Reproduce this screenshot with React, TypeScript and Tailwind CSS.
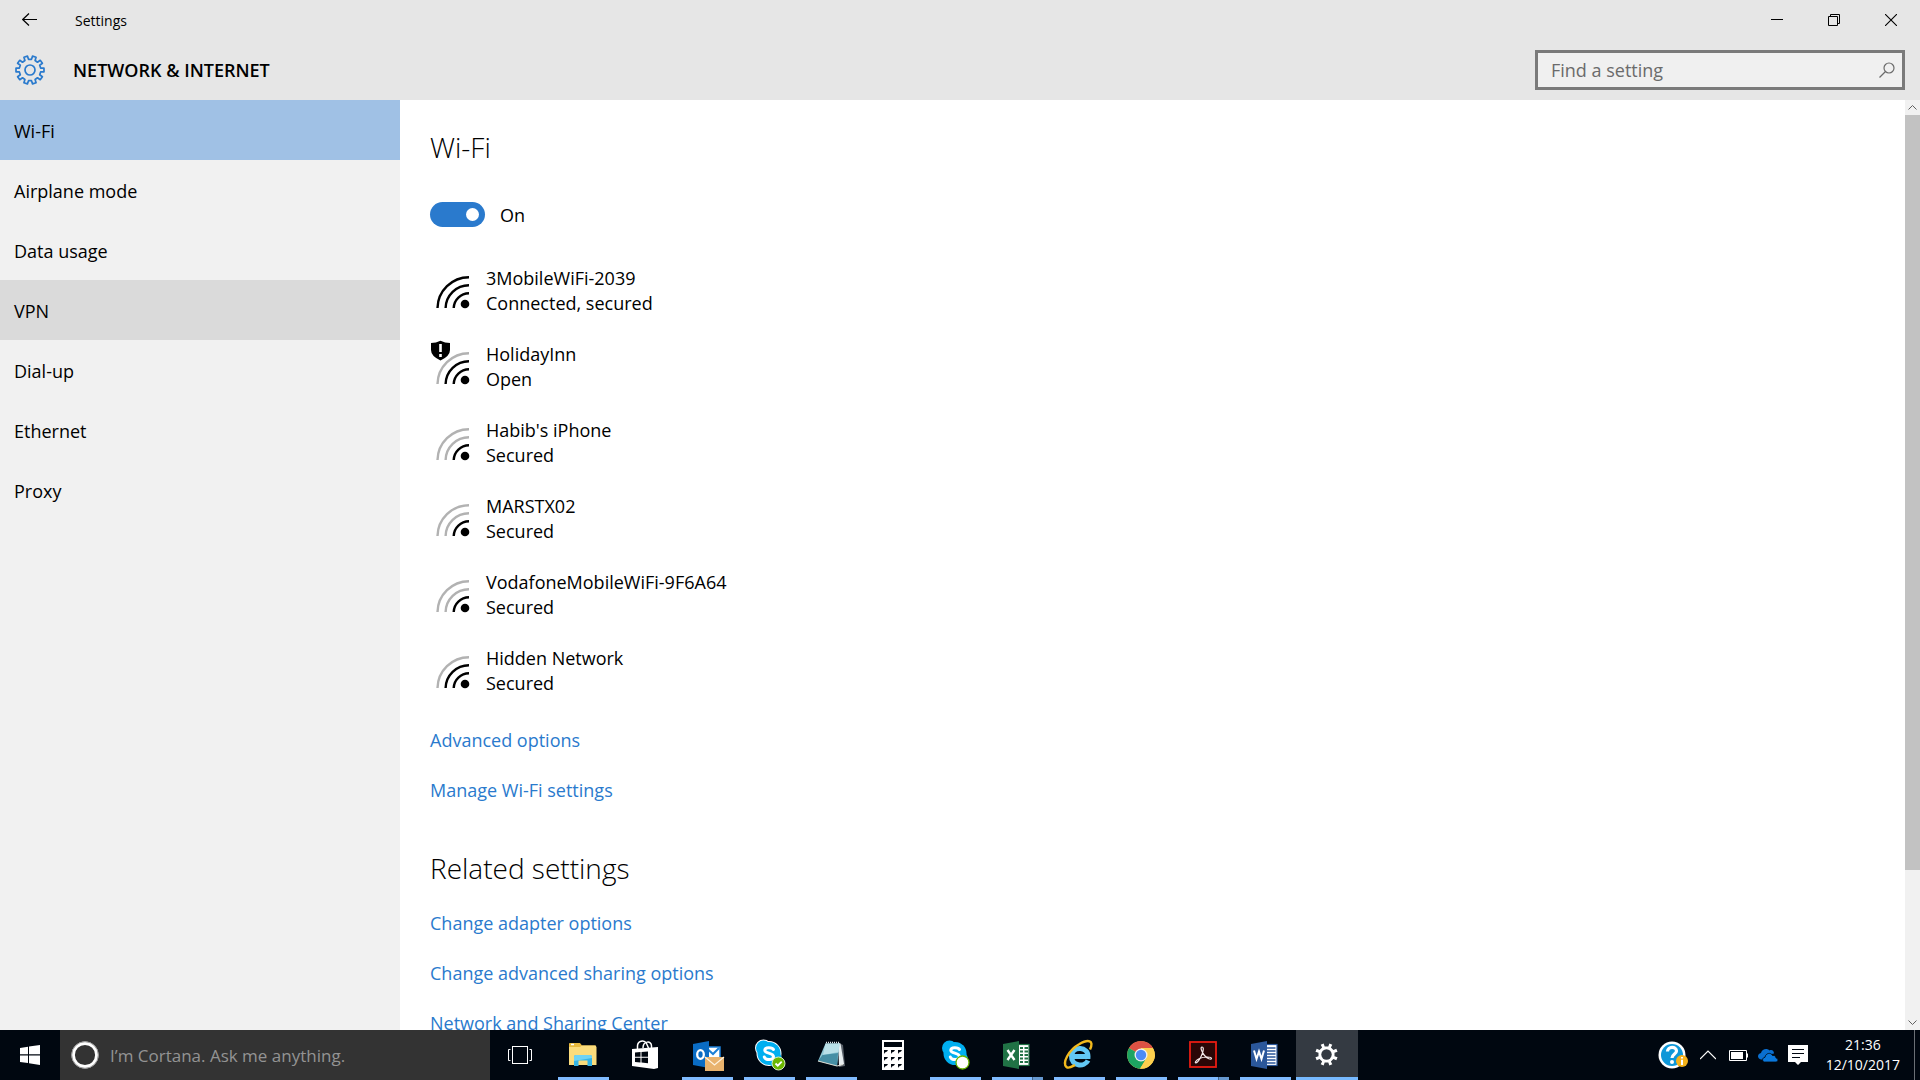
import React from "react";

type Level = 1 | 2 | 3;

const networks: { name: string; status: string; level: Level; shield?: boolean }[] = [
  { name: "3MobileWiFi-2039", status: "Connected, secured", level: 3 },
  { name: "HolidayInn", status: "Open", level: 2, shield: true },
  { name: "Habib's iPhone", status: "Secured", level: 1 },
  { name: "MARSTX02", status: "Secured", level: 1 },
  { name: "VodafoneMobileWiFi-9F6A64", status: "Secured", level: 1 },
  { name: "Hidden Network", status: "Secured", level: 2 },
];

const sections = ["Wi-Fi", "Airplane mode", "Data usage", "VPN", "Dial-up", "Ethernet", "Proxy"];

function gearPath(cx: number, cy: number, teeth: number, outer: number, inner: number, top: number, base: number) {
  const pt = (r: number, a: number) => `${(cx + r * Math.sin(a)).toFixed(2)} ${(cy - r * Math.cos(a)).toFixed(2)}`;
  const step = (2 * Math.PI) / teeth;
  const points: string[] = [];
  for (let i = 0; i < teeth; i++) {
    const a = (i + 0.5) * step;
    points.push(pt(inner, a - base * step), pt(outer, a - top * step), pt(outer, a + top * step), pt(inner, a + base * step));
  }
  return `M${points.join("L")}Z`;
}

function SignalIcon({ level, shield }: { level: Level; shield?: boolean }) {
  const tone = (n: number) => (level >= n ? "#000" : "#b2b2b2");
  return (
    <svg viewBox="0 0 40 54" className="h-[54px] w-10 shrink-0" fill="none" strokeWidth="2.4" aria-hidden="true">
      <path d="M7.5 44A31.5 31.5 0 0 1 39 13.2" stroke={tone(3)} />
      <path d="M15.6 44A23.4 23.4 0 0 1 39 21.2" stroke={tone(2)} />
      <path d="M23.7 44A15.4 15.4 0 0 1 39 29.2" stroke={tone(1)} />
      <circle cx="35" cy="40" r="4.3" fill="#000" />
      {shield && (
        <>
          <path d="M1 3Q6 3 10.500 .8Q15 3 20 3V10Q20 16 10.500 20.500Q1 16 1 10Z" fill="#000" />
          <path d="M10.500 4V12M10.500 14V17" stroke="#fff" strokeWidth="2.600" />
        </>
      )}
    </svg>
  );
}

function TextLink({ children }: { children: React.ReactNode }) {
  return (
    <div className="flex h-[50px] items-center">
      <a href="#" className="text-[#2a7acd]">
        {children}
      </a>
    </div>
  );
}

function SkypeCloud() {
  return (
    <>
      <circle cx="8.500" cy="8" r="7.500" fill="#00aff0" />
      <circle cx="19.500" cy="19" r="7.500" fill="#00aff0" />
      <circle cx="14" cy="13.500" r="11.500" fill="#00aff0" />
      <path d="M18.500 9.500C17.500 7.500 10 6.500 9.800 10.200C9.700 13.800 18.500 12.500 18.500 16.700C18.500 20.500 10.500 20.500 9.300 17" fill="none" stroke="#fff" strokeWidth="3" strokeLinecap="round" />
    </>
  );
}

const icons: Record<string, React.ReactNode> = {
  "Task View": (
    <g fill="none" stroke="#fff">
      <rect x="5.500" y="6.500" width="15" height="17" />
      <path d="M3.500 9.500H1.500V20.500H3.500M22.500 9.500H24.500V20.500H22.500" />
    </g>
  ),
  "File Explorer": (
    <>
      <path d="M0 3.500Q0 3 1 3H11L13 5.500H26Q27 5.500 27 6.500V23H0Z" fill="#e8b93e" />
      <path d="M0 7H11L13 5.500H26.500L27.500 7V25H0Z" fill="#fbdc7c" />
      <path d="M2 4.500H5" stroke="#fff" strokeWidth="1.500" />
      <path d="M5 26V17Q5 15 7 15H21Q23 15 23 17V26H18.500V20.500H9.500V26Z" fill="#36b5e6" />
      <path d="M5 21V17Q5 15 7 15H21Q23 15 23 17V18Z" fill="#6fd3f5" />
    </>
  ),
  Store: (
    <>
      <path d="M1 9L27 7V28L23 29L1 26Z" fill="#fff" />
      <path d="M6.500 9V6C6.500 1 13 -1 15.500 3.500L17.500 8M12 8C12 1 20.500 0 20.500 6V8" fill="none" stroke="#fff" strokeWidth="1.500" />
      <path d="M4 12.500L9.500 12V16.800H4ZM10.500 12L17 11.500V16.800H10.500ZM4 17.800H9.500V22.500L4 22ZM10.500 17.800H17V23.300L10.500 22.600Z" fill="#000710" />
    </>
  ),
  Outlook: (
    <>
      <rect x="14" y="7" width="13" height="12" fill="#fff" stroke="#1b7fd6" strokeWidth="1.500" />
      <path d="M15 9.500L20 14L26 8" fill="none" stroke="#1b7fd6" strokeWidth="2" />
      <path d="M0 4L16 1V28L0 25Z" fill="#0a6cc4" />
      <ellipse cx="7.500" cy="14.500" rx="3.300" ry="4.300" fill="none" stroke="#fff" strokeWidth="2.300" />
      <path d="M12 17H31V31H12Z" fill="#e9b36e" />
      <path d="M12 17L21.500 25L31 17" fill="none" stroke="#fff3df" strokeWidth="1.200" />
    </>
  ),
  Skype: (
    <>
      <g fill="#fff" stroke="#fff" strokeWidth="2">
        <circle cx="8.500" cy="8" r="7.500" />
        <circle cx="14" cy="13.500" r="11.500" />
      </g>
      <SkypeCloud />
      <circle cx="23.500" cy="23.500" r="6.500" fill="#6bb700" stroke="#d9efbd" strokeWidth="1" />
      <path d="M20.500 23.500L22.800 25.700L26.700 21.700" fill="none" stroke="#fff" strokeWidth="1.800" />
    </>
  ),
  Notepad: (
    <>
      <path d="M22 3L26 5L28 26L22 27Z" fill="#59616a" />
      <path d="M21 3L23.500 3.500L27 24L22 26Z" fill="#e7eef0" />
      <path d="M8.500 3.500H22.500L20 26L1 21Z" fill="#8fc8d6" />
      <path d="M8.500 3.500H22.500L21.500 12L6 15Z" fill="#b9e0e8" />
      <path d="M5.500 15L21 13L20 26L1 21Z" fill="#468fa5" />
      <path d="M1 21L20 26L26 24.500" fill="none" stroke="#d8d8d0" strokeWidth="1.200" />
      <path d="M9 2.500H23" stroke="#dce3e6" strokeWidth="1.500" strokeDasharray="1 1" />
    </>
  ),
  Calculator: (
    <>
      <rect x="3" y="0" width="22" height="30" fill="#fff" />
      <rect x="5" y="2" width="18" height="5" fill="#000710" />
      {[10, 17, 24].map((y) => [5, 12, 19].map((x) => <path key={`${x}-${y}`} d={`M${x} ${y}h4l-1 1.500l-2 1l-1 1.500z`} fill="#000710" />))}
    </>
  ),
  "Skype for Business": (
    <>
      <SkypeCloud />
      <circle cx="21.500" cy="22.500" r="6.500" fill="#fff" stroke="#6bb700" strokeWidth="1.300" />
    </>
  ),
  Excel: (
    <>
      <rect x="14" y="4.500" width="12" height="21" fill="#fff" stroke="#207245" strokeWidth="1.200" />
      <path d="M17 8H20M21.500 8H25M17 11.500H20M21.500 11.500H25M17 15H20M21.500 15H25M17 18.500H20M21.500 18.500H25M17 22H20M21.500 22H25" stroke="#207245" strokeWidth="2" />
      <path d="M0 4L16 1V29L0 26Z" fill="#207245" />
      <path d="M4.500 10L11.500 20M11.500 10L4.500 20" stroke="#fff" strokeWidth="2.400" />
    </>
  ),
  "Internet Explorer": (
    <>
      <path d="M5.500 16.500H23C23.500 6.500 7.500 5.500 6.500 16C6 26.500 19.500 27.500 23 20.500" fill="none" stroke="#62c8f5" strokeWidth="5" />
      <path d="M25 9.500C29.500 0 23 -1 14.500 4C3.500 10 -3 23 1.500 27C4 29 8 26 10 25" fill="none" stroke="#f2b91d" strokeWidth="2.400" />
    </>
  ),
  Chrome: (
    <>
      <circle cx="14" cy="15" r="13.800" fill="#fdd04e" />
      <path d="M14 15L2 8.100A13.800 13.800 0 0 1 26 8.100H14Z" fill="#dd5144" />
      <path d="M14 15L2 8.100A13.800 13.800 0 0 0 13 28.800L20 18Z" fill="#1da462" />
      <path d="M14 8.500H26.200A13.800 13.800 0 0 1 13 28.800L20 17Z" fill="#fdd04e" />
      <circle cx="14" cy="15" r="6.500" fill="#f1f1f1" />
      <circle cx="14" cy="15" r="5.200" fill="#4c8bf5" />
    </>
  ),
  "Acrobat Reader": (
    <>
      <rect x="1" y="2" width="26" height="25" fill="#2a0606" stroke="#e81c12" strokeWidth="1.800" />
      <path d="M13 7C11 7 12.500 12 15.500 15.500C18 18.500 22 20 22.500 18.500C22.500 16.500 15 16.500 10.500 18.500C6.500 20.500 5.500 23 7 22.800C9.500 22.500 14.500 13 14.300 8.500C14.200 7.500 13.500 7 13 7Z" fill="none" stroke="#f4e9e9" strokeWidth="1.200" />
    </>
  ),
  Word: (
    <>
      <rect x="14" y="4.500" width="12" height="21" fill="#fff" stroke="#2b579a" strokeWidth="1.200" />
      <path d="M16 8H24.500M16 11H24.500M16 14H24.500M16 17H24.500M16 20H24.500M16 23H24.500" stroke="#2b579a" strokeWidth="1.300" />
      <path d="M0 4L16 1V29L0 26Z" fill="#2b579a" />
      <path d="M3 10.500L5.500 19L8 11.500L10.500 19L13 10.500" fill="none" stroke="#fff" strokeWidth="2" />
    </>
  ),
  Settings: (
    <>
      <path d={gearPath(13.5, 14.5, 8, 11.4, 8.2, 0.18, 0.22)} fill="#fff" />
      <circle cx="13.500" cy="14.500" r="5.200" fill="#343a42" />
    </>
  ),
};

const apps: { name: string; open?: boolean; stacked?: boolean; active?: boolean }[] = [
  { name: "Task View" },
  { name: "File Explorer", open: true },
  { name: "Store" },
  { name: "Outlook", open: true },
  { name: "Skype", open: true },
  { name: "Notepad", open: true },
  { name: "Calculator" },
  { name: "Skype for Business", open: true },
  { name: "Excel", open: true, stacked: true },
  { name: "Internet Explorer", open: true },
  { name: "Chrome", open: true },
  { name: "Acrobat Reader", open: true, stacked: true },
  { name: "Word", open: true },
  { name: "Settings", active: true },
];

function Header() {
  return (
    <header className="shrink-0 bg-[#e6e6e6]">
      <div className="flex h-10 items-center">
        <button aria-label="Back" className="flex h-10 w-[60px] items-center justify-center">
          <svg viewBox="0 0 16 14" className="h-3.5 w-4" fill="none" stroke="#000" strokeWidth="1.200">
            <path d="M15 6.500H.7M7 .5L.7 6.500L7 12.500" />
          </svg>
        </button>
        <span className="pl-[15px] text-[14px]">Settings</span>
        <div className="ml-auto flex pr-px">
          <button aria-label="Minimize" className="flex h-10 w-[57px] items-center justify-center">
            <svg viewBox="0 0 12 12" className="size-3">
              <path d="M0 5.500H12" stroke="#000" />
            </svg>
          </button>
          <button aria-label="Restore" className="flex h-10 w-[57px] items-center justify-center">
            <svg viewBox="0 0 12 12" className="size-3" fill="none" stroke="#000">
              <path d="M.5 2.500H9.500V11.500H.5ZM2.500 2.500V.5H11.500V9.500H9.500" />
            </svg>
          </button>
          <button aria-label="Close" className="flex h-10 w-[57px] items-center justify-center">
            <svg viewBox="0 0 12 12" className="size-3" stroke="#000" strokeWidth="1.100">
              <path d="M0 0L12 12M12 0L0 12" />
            </svg>
          </button>
        </div>
      </div>
      <div className="flex h-[60px] items-center pr-[15px]">
        <svg viewBox="0 0 30 30" className="ml-[15px] size-[30px]" fill="none" stroke="#2a7acd" strokeWidth="1.700" strokeLinejoin="round" aria-hidden="true">
          <path d={gearPath(15, 15, 10, 14.1, 10.8, 0.21, 0.28)} />
          <circle cx="15" cy="15" r="5" />
        </svg>
        <h1 className="pl-7 text-[18px] font-semibold">NETWORK &amp; INTERNET</h1>
        <label className="ml-auto flex h-10 w-[370px] items-center border-[3px] border-[#7a7a7a] bg-[#f0f0f0] pl-[13px] pr-[7px]">
          <span className="sr-only">Find a setting</span>
          <input type="text" placeholder="Find a setting" className="h-full min-w-0 flex-1 bg-transparent text-[18px] outline-none placeholder:text-[#6b6b6b]" />
          <svg viewBox="0 0 16 16" className="size-4" fill="none" stroke="#6b6b6b" strokeWidth="1.200" aria-hidden="true">
            <circle cx="10" cy="6" r="5" />
            <path d="M6.500 9.500L.5 15.500" />
          </svg>
        </label>
      </div>
    </header>
  );
}

function Taskbar() {
  return (
    <footer className="flex h-[50px] shrink-0 bg-[#000710] text-white">
      <button aria-label="Start" className="flex w-[60px] items-center justify-center">
        <svg viewBox="0 0 20 20" className="size-5" fill="#fff">
          <path d="M0 3L8 1.800V9.300H0ZM9 1.600L20 0V9.300H9ZM0 10.500H8V18L0 17ZM9 10.500H20V20L9 18.300Z" />
        </svg>
      </button>
      <label className="flex w-[430px] items-center gap-[11px] bg-[#333333] pl-[11px]">
        <span className="sr-only">Ask Cortana</span>
        <svg viewBox="0 0 28 28" className="size-7" fill="none" aria-hidden="true">
          <circle cx="14" cy="14" r="11.800" stroke="#fff" strokeWidth="3.400" />
          <circle cx="14" cy="14" r="13.300" stroke="#9a9a9a" />
        </svg>
        <input type="text" placeholder="I’m Cortana. Ask me anything." className="h-full min-w-0 flex-1 bg-transparent text-[17px] outline-none placeholder:text-[#939393]" />
      </label>
      <nav aria-label="Applications" className="flex">
        {apps.map((app) => (
          <button
            key={app.name}
            aria-label={app.name}
            className={`flex w-[62px] flex-col items-center ${app.active ? "bg-[#343a42]" : ""}`}
          >
            <span className="flex flex-1 items-center pt-[3px]">
              <svg viewBox="0 0 28 30" className="h-[30px] w-7 overflow-visible">
                {icons[app.name]}
              </svg>
            </span>
            <span className={`flex h-[3px] justify-end ${app.active ? "w-full bg-[#76b9ff]" : app.open ? "w-[51px] bg-[#80bbff]" : "w-full"}`}>
              {app.stacked && <span className="w-[11px] border-l border-[#41648a] bg-[#6698d0]" />}
            </span>
          </button>
        ))}
      </nav>
      <div className="ml-auto flex items-center">
        <button aria-label="Help" className="mr-[12px]">
          <svg viewBox="0 0 30 28" className="h-7 w-[30px]">
            <circle cx="14" cy="14" r="13.500" fill="#fff" />
            <circle cx="14" cy="14" r="11" fill="#0e97d8" />
            <path d="M9.500 10.500C9.500 5 18.500 5 18.500 10C18.500 13 14 13 14 17" fill="none" stroke="#fff" strokeWidth="3.200" />
            <circle cx="14" cy="21" r="2" fill="#fff" />
            <circle cx="24" cy="20" r="6" fill="#f5b21b" />
            <path d="M24 16V17.500M24 18.700V24" stroke="#fff" strokeWidth="2" />
          </svg>
        </button>
        <button aria-label="Show hidden icons" className="mr-[13px]">
          <svg viewBox="0 0 16 10" className="h-2.5 w-4" fill="none" stroke="#fff" strokeWidth="1.200">
            <path d="M0 9L8 1L16 9" />
          </svg>
        </button>
        <button aria-label="Battery" className="mr-[10px]">
          <svg viewBox="0 0 19 11" className="h-[11px] w-[19px]" fill="#fff">
            <path d="M.5 .5H17.500V10.500H.5Z" fill="none" stroke="#fff" />
            <rect x="2" y="2" width="12" height="7" />
            <rect x="18" y="3.500" width="1" height="4" />
          </svg>
        </button>
        <button aria-label="OneDrive" className="mr-[10px]">
          <svg viewBox="0 0 20 13" className="h-[13px] w-5">
            <path d="M5 10.500H3C-1 10-1 4.500 3 4C4 -.5 9.500 -1 11.500 1.500C14 .3 16 2 16 4.500L9 6Z" fill="#0a6fd0" />
            <path d="M6.500 13C3.800 12.500 4 8.500 7 8.300C7.500 4 13 3 14.500 6.500C17 6 18 7.500 18 9C20.700 9.500 20.500 12.700 18 13Z" fill="#0a78dc" stroke="#000710" strokeWidth=".8" />
          </svg>
        </button>
        <button aria-label="Notifications" className="mr-[18px]">
          <svg viewBox="0 0 20 20" className="size-5">
            <path d="M0 0H20V17H13L10 20L7 17H0Z" fill="#fff" />
            <path d="M4 4.500H16M4 8.500H16M4 12.500H12" stroke="#000710" />
          </svg>
        </button>
        <time className="mr-[14px] text-center text-[14px] leading-5">
          21:36
          <br />
          12/10/2017
        </time>
        <button aria-label="Show desktop" className="w-1.5 self-stretch border-l border-[#6a6f75]" />
      </div>
    </footer>
  );
}

export default function App() {
  return (
    <div className="flex h-screen flex-col overflow-hidden bg-white font-['Open_Sans',sans-serif] text-[18px] leading-[25px] text-black">
      <Header />
      <div className="flex min-h-0 flex-1">
        <nav aria-label="Settings sections" className="w-[400px] shrink-0 bg-[#f1f1f1]">
          {sections.map((s) => (
            <a
              key={s}
              href="#"
              className={`flex h-[60px] items-center pl-[14px] pt-[2px] ${s === "Wi-Fi" ? "bg-[#a0c1e5]" : s === "VPN" ? "bg-[#dadada]" : ""}`}
            >
              {s}
            </a>
          ))}
        </nav>
        <main className="min-w-0 flex-1 overflow-hidden pl-[30px]">
          <h2 className="pt-[27px] text-[28px] font-light leading-10">Wi-Fi</h2>
          <label className="mt-[35px] flex h-[25px] items-center gap-[15px]">
            <input type="checkbox" role="switch" defaultChecked className="peer sr-only" />
            <span className="flex h-[25px] w-[55px] items-center justify-end rounded-full bg-[#2a7acd] pr-1.5">
              <span className="size-[13px] rounded-full bg-white" />
            </span>
            <span className="pt-[2px]">On</span>
          </label>
          <ul className="pt-[26px]">
            {networks.map((n) => (
              <li key={n.name}>
                <button className="flex h-[76px] w-full items-center gap-4 text-left">
                  <SignalIcon level={n.level} shield={n.shield} />
                  <span>
                    {n.name}
                    <br />
                    {n.status}
                  </span>
                </button>
              </li>
            ))}
          </ul>
          <div className="pt-1.5">
            <TextLink>Advanced options</TextLink>
            <TextLink>Manage Wi-Fi settings</TextLink>
          </div>
          <h2 className="mb-[10px] mt-[33px] text-[28px] font-light leading-10">Related settings</h2>
          <TextLink>Change adapter options</TextLink>
          <TextLink>Change advanced sharing options</TextLink>
          <TextLink>Network and Sharing Center</TextLink>
        </main>
        <div className="flex w-[15px] shrink-0 flex-col bg-[#f1f1f1]">
          <button aria-label="Scroll up" className="flex h-[15px] items-center justify-center">
            <svg viewBox="0 0 9 5" className="h-[5px] w-[9px]" fill="none" stroke="#606060">
              <path d="M.5 4.500L4.500 .5L8.500 4.500" />
            </svg>
          </button>
          <div className="flex-[755] bg-[#c2c2c2]" />
          <div className="flex-[145]" />
          <button aria-label="Scroll down" className="flex h-[15px] items-center justify-center">
            <svg viewBox="0 0 9 5" className="h-[5px] w-[9px]" fill="none" stroke="#606060">
              <path d="M.5 .5L4.500 4.500L8.500 .5" />
            </svg>
          </button>
        </div>
      </div>
      <Taskbar />
    </div>
  );
}
